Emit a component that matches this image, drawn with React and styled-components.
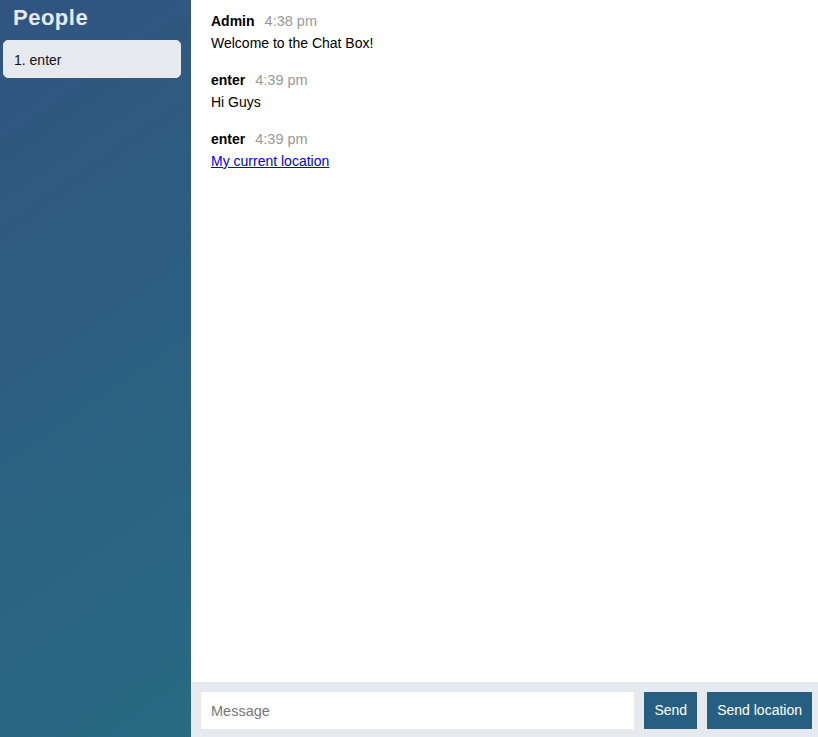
import React from 'react'
import styled, { createGlobalStyle } from 'styled-components'

const GlobalStyle = createGlobalStyle`
  * {
    margin: 0;
    padding: 0;
    box-sizing: border-box;
  }
  body {
    font-family: "Liberation Sans", Arial, sans-serif;
    font-size: 14px;
    color: #111;
  }
`

const messages = [
  { from: 'Admin', at: '4:38 pm', text: 'Welcome to the Chat Box!' },
  { from: 'enter', at: '4:39 pm', text: 'Hi Guys' },
  { from: 'enter', at: '4:39 pm', link: 'My current location' },
]

const people = ['enter']

const App = () => {
  return (
    <>
      <GlobalStyle />
      <Chat>
        <Sidebar>
          <Heading>People</Heading>
          <PeopleList>
            {people.map((p, i) => (
              <Person key={i}>{i + 1}. {p}</Person>
            ))}
          </PeopleList>
        </Sidebar>
        <Main>
          <MessageList>
            {messages.map((m, i) => (
              <Message key={i}>
                <MessageTitle>
                  <Author>{m.from}</Author>
                  <Time>{m.at}</Time>
                </MessageTitle>
                <MessageBody>
                  {m.link ? <a href="#">{m.link}</a> : m.text}
                </MessageBody>
              </Message>
            ))}
          </MessageList>
          <Footer>
            <MessageInput placeholder="Message" />
            <Button>Send</Button>
            <Button>Send location</Button>
          </Footer>
        </Main>
      </Chat>
    </>
  )
}

export default App

const Chat = styled.div`
  display: flex;
  height: 100vh;
  width: 100%;
`

const Sidebar = styled.aside`
  width: 191px;
  flex-shrink: 0;
  height: 100vh;
  padding: 5px 10px 0 3px;
  background: linear-gradient(325deg, rgb(39, 107, 130) 0%, rgb(49, 84, 129) 100%);
`

const Heading = styled.h3`
  color: #e6eaee;
  font-size: 22px;
  font-weight: 700;
  line-height: 26px;
  margin: 0 0 9px 10px;
  letter-spacing: 0.5px;
`

const PeopleList = styled.ul`
  list-style: none;
`

const Person = styled.li`
  background: #e6eaee;
  border: 1px solid #e6eaee;
  border-radius: 5px;
  padding: 11px 10px 9px;
  height: 38px;
  line-height: 16px;
  font-size: 14px;
  color: #111;
`

const Main = styled.div`
  flex: 1;
  display: flex;
  flex-direction: column;
  min-width: 0;
`

const MessageList = styled.ol`
  list-style: none;
  flex: 1;
  padding: 3px 10px;
  overflow-y: auto;
`

const Message = styled.li`
  padding: 10px;
`

const MessageTitle = styled.div`
  display: flex;
  align-items: baseline;
  margin-bottom: 5px;
  line-height: 17px;
`

const Author = styled.h4`
  font-size: 14px;
  font-weight: 700;
  margin-right: 10px;
  color: #000;
`

const Time = styled.span`
  color: #999;
  font-size: 14.5px;
`

const MessageBody = styled.p`
  line-height: 17px;
  font-size: 14px;
  color: #000;

  a {
    color: #0000ee;
  }
`

const Footer = styled.form`
  display: flex;
  gap: 10px;
  background: #e6eaee;
  padding: 10px 6px 8px 10px;
  flex-shrink: 0;
`

const MessageInput = styled.input`
  flex: 1;
  border: none;
  outline: none;
  padding: 10px;
  font-family: inherit;
  font-size: 14.5px;
  line-height: 17px;
  height: 37px;
  background: #fff;

  &::placeholder {
    color: #777;
  }
`

const Button = styled.button`
  background: #265f82;
  border: none;
  color: #fff;
  padding: 10px;
  font-family: inherit;
  font-size: 14px;
  line-height: 17px;
  height: 37px;
  cursor: pointer;
`
